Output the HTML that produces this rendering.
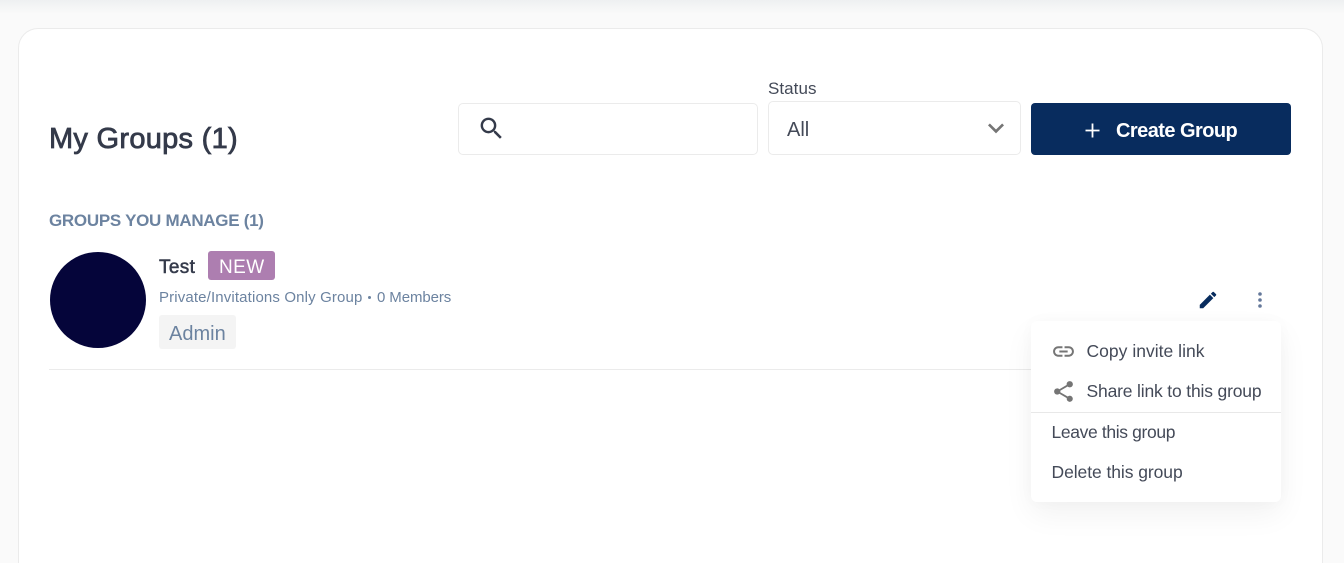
<!DOCTYPE html>
<html><head><meta charset="utf-8">
<style>
html,body{margin:0;padding:0;width:1344px;height:563px;overflow:hidden;background:#fafafa;font-family:"Liberation Sans",sans-serif;color:#343a4a}
#root{position:absolute;left:0;top:0;width:1344px;height:563px;overflow:hidden}
.t{position:absolute;white-space:nowrap;line-height:1}
.b{position:absolute;box-sizing:border-box}
svg{position:absolute;display:block}
</style></head><body>
<div id="root">
<div class="b" style="left:0;top:0;width:1344px;height:14px;background:linear-gradient(#eef0f1,#fafafa)"></div>
<div class="b" style="left:18px;top:28px;width:1305px;height:535px;background:#fff;border:1px solid #ebebeb;border-bottom:0;border-radius:20px 20px 0 0"></div>

<div class="t" style="left:49px;top:125px;font-size:29px;letter-spacing:.28px;color:#343a4a;-webkit-text-stroke:.8px #343a4a">My Groups (1)</div>

<div class="b" style="left:458px;top:103px;width:300px;height:52px;border:1px solid #ebebeb;border-radius:5px;background:#fff"></div>
<svg style="left:477px;top:114px" width="29" height="29" viewBox="0 0 24 24"><path fill="#343a4a" d="M15.5 14h-.79l-.28-.27A6.47 6.47 0 0 0 16 9.5 6.5 6.5 0 1 0 9.5 16c1.61 0 3.09-.59 4.23-1.57l.27.28v.79l5 4.99L20.49 19l-4.99-5zm-6 0C7.01 14 5 11.99 5 9.5S7.01 5 9.5 5 14 7.01 14 9.5 11.99 14 9.5 14z"/></svg>

<div class="t" style="left:768px;top:80px;font-size:17px;letter-spacing:.05px;color:#444a58">Status</div>
<div class="b" style="left:768px;top:101px;width:253px;height:54px;border:1px solid #ebebeb;border-radius:5px;background:#fff"></div>
<div class="t" style="left:787px;top:120px;font-size:20px;color:#444a58">All</div>
<svg style="left:980px;top:112px" width="32" height="32" viewBox="0 0 24 24"><path fill="#757575" d="M7.41 8.59 12 13.17l4.59-4.58L18 10l-6 6-6-6z"/></svg>

<div class="b" style="left:1031px;top:103px;width:260px;height:52px;background:#082c5e;border-radius:4px"></div>
<svg style="left:1084px;top:122px" width="17" height="17" viewBox="0 0 17 17"><path stroke="#fff" stroke-width="1.8" fill="none" d="M8.5 1.5v14M1.5 8.5h14"/></svg>
<div class="t" style="left:1116px;top:121px;font-size:20px;font-weight:700;letter-spacing:-.55px;color:#fff">Create Group</div>

<div class="t" style="left:49px;top:212px;font-size:17px;font-weight:700;letter-spacing:-.29px;color:#6c83a0">GROUPS YOU MANAGE (1)</div>

<div class="b" style="left:50px;top:252px;width:96px;height:96px;border-radius:50%;background:#05053a"></div>
<div class="t" style="left:159px;top:258px;font-size:19px;letter-spacing:.35px;color:#343a4a;-webkit-text-stroke:.5px #343a4a">Test</div>
<div class="b" style="left:208px;top:251px;width:67px;height:29px;background:#ad7eb0;border-radius:3px"></div>
<div class="t" style="left:219px;top:258px;font-size:19px;letter-spacing:.4px;color:#fff">NEW</div>
<div class="t" style="left:159px;top:290px;font-size:15px;letter-spacing:.14px;color:#6c83a0">Private/Invitations Only Group</div>
<div class="b" style="left:368px;top:296px;width:3px;height:3px;border-radius:50%;background:#6c83a0"></div>
<div class="t" style="left:377px;top:290px;font-size:15px;letter-spacing:-.1px;color:#6c83a0">0 Members</div>
<div class="b" style="left:159px;top:315px;width:77px;height:34px;background:#f4f4f4;border-radius:3px"></div>
<div class="t" style="left:169px;top:324px;font-size:20px;color:#6c83a0">Admin</div>
<div class="b" style="left:49px;top:369px;width:1000px;height:1px;background:#ebebeb"></div>

<svg style="left:1197px;top:289px" width="22" height="22" viewBox="0 0 24 24"><path fill="#082c5e" d="M3 17.25V21h3.75L17.81 9.94l-3.75-3.75L3 17.25zM20.71 7.04a1 1 0 0 0 0-1.41l-2.34-2.34a1 1 0 0 0-1.41 0l-1.83 1.83 3.75 3.75 1.83-1.83z"/></svg>
<svg style="left:1248px;top:288px" width="24" height="24" viewBox="0 0 24 24"><circle cx="12" cy="6" r="1.8" fill="#64789a"/><circle cx="12" cy="12" r="1.8" fill="#64789a"/><circle cx="12" cy="18" r="1.8" fill="#64789a"/></svg>

<div class="b" style="left:1031px;top:321px;width:250px;height:181px;background:#fff;border-radius:6px;box-shadow:0 12px 30px rgba(0,0,0,.055),0 0 16px rgba(0,0,0,.025)"></div>
<svg style="left:1051px;top:339px" width="25" height="25" viewBox="0 0 24 24"><path fill="#757575" d="M3.9 12c0-1.71 1.39-3.1 3.1-3.1h4V7H7c-2.76 0-5 2.24-5 5s2.24 5 5 5h4v-1.9H7c-1.71 0-3.1-1.39-3.1-3.1zM8 13h8v-2H8v2zm9-6h-4v1.9h4c1.71 0 3.1 1.39 3.1 3.1s-1.39 3.1-3.1 3.1h-4V17h4c2.76 0 5-2.24 5-5s-2.24-5-5-5z"/></svg>
<div class="t" style="left:1086.5px;top:343px;font-size:17.5px;letter-spacing:.02px;color:#444a58">Copy invite link</div>
<svg style="left:1051px;top:379px" width="25" height="25" viewBox="0 0 24 24"><path fill="#757575" d="M18 16.08c-.76 0-1.44.3-1.96.77L8.91 12.7c.05-.23.09-.46.09-.7s-.04-.47-.09-.7l7.05-4.11c.54.5 1.25.81 2.04.81 1.66 0 3-1.34 3-3s-1.34-3-3-3-3 1.34-3 3c0 .24.04.47.09.7L8.04 9.81C7.5 9.31 6.79 9 6 9c-1.66 0-3 1.34-3 3s1.34 3 3 3c.79 0 1.5-.31 2.04-.81l7.12 4.16c-.05.21-.08.43-.08.65 0 1.61 1.31 2.92 2.92 2.92s2.92-1.31 2.92-2.92-1.31-2.92-2.92-2.92z"/></svg>
<div class="t" style="left:1086.5px;top:383px;font-size:17.5px;letter-spacing:-.17px;color:#444a58">Share link to this group</div>
<div class="b" style="left:1031px;top:412px;width:250px;height:1px;background:#e8e8e8"></div>
<div class="t" style="left:1051.5px;top:424px;font-size:17.5px;letter-spacing:-.36px;color:#444a58">Leave this group</div>
<div class="t" style="left:1051.5px;top:464px;font-size:17.5px;letter-spacing:-.07px;color:#444a58">Delete this group</div>
</div>
</body></html>
